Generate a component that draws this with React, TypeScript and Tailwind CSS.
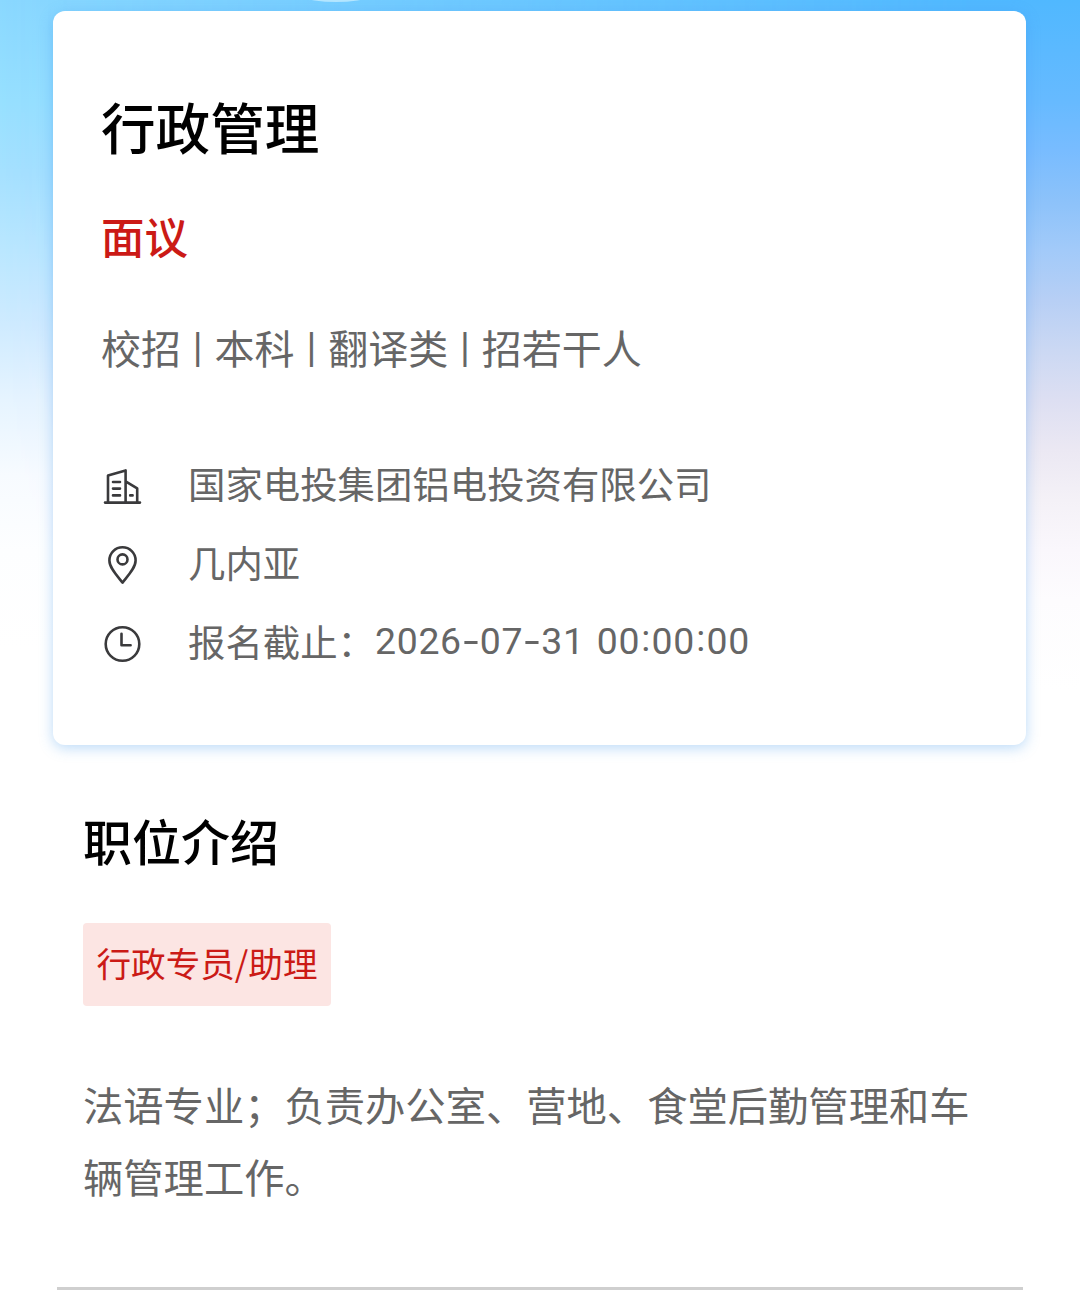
import type { ReactNode } from 'react';

const tags = [
  { label: '校招', divider: true },
  { label: '本科', divider: true },
  { label: '翻译类', divider: true },
  { label: '招若干人', divider: false },
];

const BuildingIcon = () => (
  <svg width="40" height="40" viewBox="0 0 40 40" fill="none" stroke="#3a3a3c" strokeWidth="2.6" strokeLinecap="round" strokeLinejoin="round">
    <path d="M3 36.6h35M6 36V9.6L23.6 4.4V36M24 15.6l11.2 6.8V36" />
    <path d="M11 16h7M11 22.6h7M11 29.4h7M28.2 29.4h2.4" />
  </svg>
);

const PinIcon = () => (
  <svg width="40" height="40" viewBox="0 0 40 40" fill="none" stroke="#3a3a3c" strokeWidth="2.6" strokeLinejoin="round">
    <path d="M20.5 37.6C14.5 30 7.4 22.6 7.4 15.4a13.1 13.1 0 0 1 26.2 0C33.6 22.6 26.5 30 20.5 37.6Z" />
    <circle cx="20.5" cy="14.4" r="5" />
  </svg>
);

const ClockIcon = () => (
  <svg width="40" height="40" viewBox="0 0 40 40" fill="none" stroke="#3a3a3c" strokeWidth="2.6" strokeLinecap="round" strokeLinejoin="round">
    <circle cx="20.5" cy="20" r="16.8" />
    <path d="M19.5 9.8V21.2H28.6" />
  </svg>
);

const InfoRow = ({ icon, children }: { icon: ReactNode; children: ReactNode }) => (
  <div className="flex h-[79px] items-center">
    <span className="mr-[46px] mt-[7px] shrink-0">{icon}</span>
    <span className="flex h-[56px] items-center whitespace-nowrap text-[37.4px] leading-[56px] text-[#666]">{children}</span>
  </div>
);

// Digits keep the font's advance, punctuation gets a slightly wider slot
const Deadline = ({ value }: { value: string }) => (
  <span className="font-[Roboto,sans-serif] tracking-[0.7px]">
    {value.split(/([-:])/).map((part, index) => {
      if (part === '-') {
        return (
          <span key={index} className="inline-block w-[18px] scale-x-110 text-center font-[Inter,sans-serif] tracking-normal">
            -
          </span>
        );
      }
      if (part === ':') {
        return (
          <span key={index} className="relative -top-[3px] inline-block w-[11.5px] text-center tracking-normal">
            :
          </span>
        );
      }
      return <span key={index} className="[word-spacing:2px]">{part}</span>;
    })}
  </span>
);

const App = () => {
  return (
    <div className="relative h-[1301px] w-[1080px] overflow-hidden bg-white font-['Noto_Sans_CJK_SC',sans-serif]">
      {/* Sky background, cool on the left and deeper on the right */}
      <div className="absolute inset-x-0 top-0 h-[700px] bg-[linear-gradient(180deg,#8ad8ff_0px,#97e0ff_100px,#a6e1ff_175px,#bae7ff_250px,#cfebff_325px,#e6f4ff_400px,#f7fbff_475px,#fdfeff_550px,#fff_650px)]" />
      <div className="absolute inset-x-0 top-0 h-[700px] bg-[linear-gradient(180deg,#50b8ff_0px,#66baff_100px,#78bcff_150px,#8cc2fa_200px,#a2caf9_250px,#b7cff5_300px,#cbd8f3_350px,#dddff2_400px,#ebe8f3_450px,#f4f1f7_500px,#faf7fc_550px,#fdfcfe_600px,#fff_690px)] [mask-image:linear-gradient(90deg,transparent,black_90%)]" />
      <div className="absolute -top-[38px] left-[280px] h-10 w-[112px] rounded-[50%] bg-[#b5e6ff]" />

      <main className="relative pt-[11px]">
        <section className="ml-[53px] h-[734px] w-[973px] rounded-[12px] bg-white px-[48px] pt-[75px] shadow-[0_3px_14px_rgba(60,150,235,0.35)]">
          <h1 className="text-[54.6px] font-medium leading-[80px] text-black">行政管理</h1>
          <p className="mt-[38px] text-[43.4px] font-medium leading-[62px] text-[#cb1a16]">面议</p>
          <div className="mt-[53px] flex h-[56px] items-center whitespace-nowrap text-[40px] leading-[56px] text-[#666]">
            {tags.map((tag) => (
              <span key={tag.label} className="flex items-center">
                {tag.label}
                {tag.divider && (
                  <span className="w-[33.6px] text-center font-['Liberation_Sans',sans-serif] text-[36px]">|</span>
                )}
              </span>
            ))}
          </div>

          <div className="mt-[68px] pl-px">
            <InfoRow icon={<BuildingIcon />}>国家电投集团铝电投资有限公司</InfoRow>
            <InfoRow icon={<PinIcon />}>几内亚</InfoRow>
            <InfoRow icon={<ClockIcon />}>
              报名截止：
              <Deadline value="2026-07-31 00:00:00" />
            </InfoRow>
          </div>
        </section>

        <section className="ml-[57px] w-[966px] px-[26px] pt-[60px]">
          <h2 className="text-[49px] font-medium leading-[70px] text-black">职位介绍</h2>
          <span className="mt-[48px] flex h-[83px] w-[248px] items-center justify-center whitespace-nowrap rounded-[4px] bg-[#fce5e3] pb-[3px] text-[34.6px] text-[#cb1a16]">
            行政专员/助理
          </span>
          <p className="mt-[62px] w-[900px] text-[40.3px] leading-[71.5px] text-[#666]">
            法语专业；负责办公室、营地、食堂后勤管理和车辆管理工作。
          </p>
        </section>
        <div className="ml-[57px] mt-[76px] h-[3px] w-[966px] bg-[#cfcfcf]" />
      </main>
    </div>
  );
};

export default App;
